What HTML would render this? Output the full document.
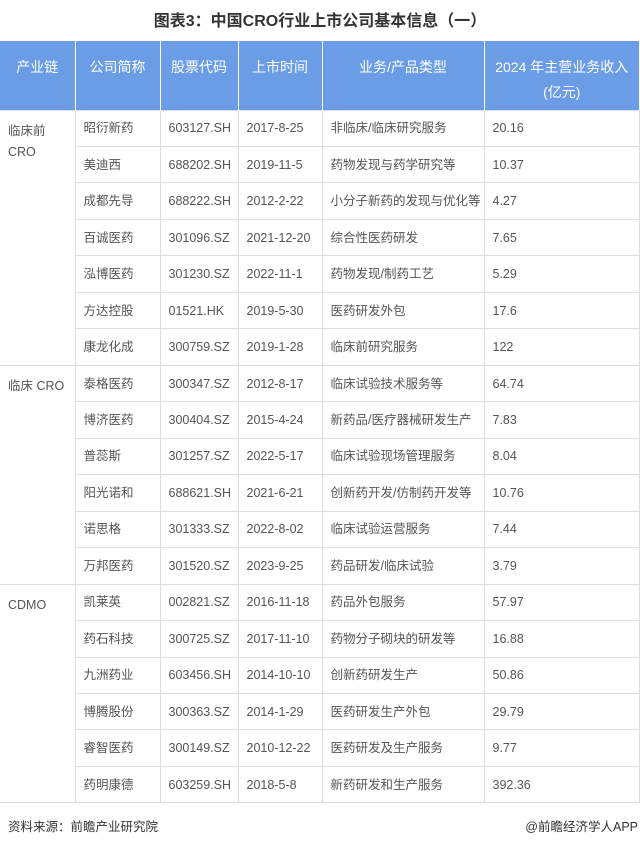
<!DOCTYPE html>
<html><head><meta charset="utf-8"><style>
body{margin:0;width:640px;height:845px;background:#fff;font-family:"Liberation Sans","Noto Sans CJK SC",sans-serif;position:relative;overflow:hidden}
.title{position:absolute;top:7px;left:0;width:640px;text-align:center;font-size:16px;font-weight:bold;color:#333}
table{position:absolute;top:41px;left:0;border-collapse:collapse;table-layout:fixed;width:639px}
th{background:#6a9de6;color:#fff;font-weight:normal;font-size:14px;height:69px;border-left:1px solid #fff;padding:0;vertical-align:top;padding-top:16px;box-sizing:border-box;line-height:20px}
th:first-child{border-left:none}
td{height:36.47px;padding:0 0 0 8px;font-size:12.5px;line-height:16px;color:#555;border:1px solid #ddd;box-sizing:border-box;white-space:nowrap;vertical-align:middle;overflow:hidden}
td.g{vertical-align:top;padding-top:10px;line-height:21px;white-space:normal;border-left:none}
.foot{position:absolute;top:816px;font-size:12.5px;color:#333}
</style></head><body>
<div class="title">图表3：中国CRO行业上市公司基本信息（一）</div>
<table>
<colgroup><col style="width:75px"><col style="width:85px"><col style="width:78px"><col style="width:84px"><col style="width:162px"><col style="width:155px"></colgroup>
<tr><th>产业链</th><th>公司简称</th><th>股票代码</th><th>上市时间</th><th>业务/产品类型</th><th style="line-height:25px;padding-top:14px">2024 年主营业务收入<br>(亿元)</th></tr>
<tr><td class="g" rowspan="7">临床前<br>CRO</td><td>昭衍新药</td><td>603127.SH</td><td>2017-8-25</td><td>非临床/临床研究服务</td><td>20.16</td></tr>
<tr><td>美迪西</td><td>688202.SH</td><td>2019-11-5</td><td>药物发现与药学研究等</td><td>10.37</td></tr>
<tr><td>成都先导</td><td>688222.SH</td><td>2012-2-22</td><td>小分子新药的发现与优化等</td><td>4.27</td></tr>
<tr><td>百诚医药</td><td>301096.SZ</td><td>2021-12-20</td><td>综合性医药研发</td><td>7.65</td></tr>
<tr><td>泓博医药</td><td>301230.SZ</td><td>2022-11-1</td><td>药物发现/制药工艺</td><td>5.29</td></tr>
<tr><td>方达控股</td><td>01521.HK</td><td>2019-5-30</td><td>医药研发外包</td><td>17.6</td></tr>
<tr><td>康龙化成</td><td>300759.SZ</td><td>2019-1-28</td><td>临床前研究服务</td><td>122</td></tr>
<tr><td class="g" rowspan="6">临床 CRO</td><td>泰格医药</td><td>300347.SZ</td><td>2012-8-17</td><td>临床试验技术服务等</td><td>64.74</td></tr>
<tr><td>博济医药</td><td>300404.SZ</td><td>2015-4-24</td><td>新药品/医疗器械研发生产</td><td>7.83</td></tr>
<tr><td>普蕊斯</td><td>301257.SZ</td><td>2022-5-17</td><td>临床试验现场管理服务</td><td>8.04</td></tr>
<tr><td>阳光诺和</td><td>688621.SH</td><td>2021-6-21</td><td>创新药开发/仿制药开发等</td><td>10.76</td></tr>
<tr><td>诺思格</td><td>301333.SZ</td><td>2022-8-02</td><td>临床试验运营服务</td><td>7.44</td></tr>
<tr><td>万邦医药</td><td>301520.SZ</td><td>2023-9-25</td><td>药品研发/临床试验</td><td>3.79</td></tr>
<tr><td class="g" rowspan="6">CDMO</td><td>凯莱英</td><td>002821.SZ</td><td>2016-11-18</td><td>药品外包服务</td><td>57.97</td></tr>
<tr><td>药石科技</td><td>300725.SZ</td><td>2017-11-10</td><td>药物分子砌块的研发等</td><td>16.88</td></tr>
<tr><td>九洲药业</td><td>603456.SH</td><td>2014-10-10</td><td>创新药研发生产</td><td>50.86</td></tr>
<tr><td>博腾股份</td><td>300363.SZ</td><td>2014-1-29</td><td>医药研发生产外包</td><td>29.79</td></tr>
<tr><td>睿智医药</td><td>300149.SZ</td><td>2010-12-22</td><td>医药研发及生产服务</td><td>9.77</td></tr>
<tr><td>药明康德</td><td>603259.SH</td><td>2018-5-8</td><td>新药研发和生产服务</td><td>392.36</td></tr>
</table>
<div class="foot" style="left:8px">资料来源：前瞻产业研究院</div>
<div class="foot" style="right:2px">@前瞻经济学人APP</div>
</body></html>
